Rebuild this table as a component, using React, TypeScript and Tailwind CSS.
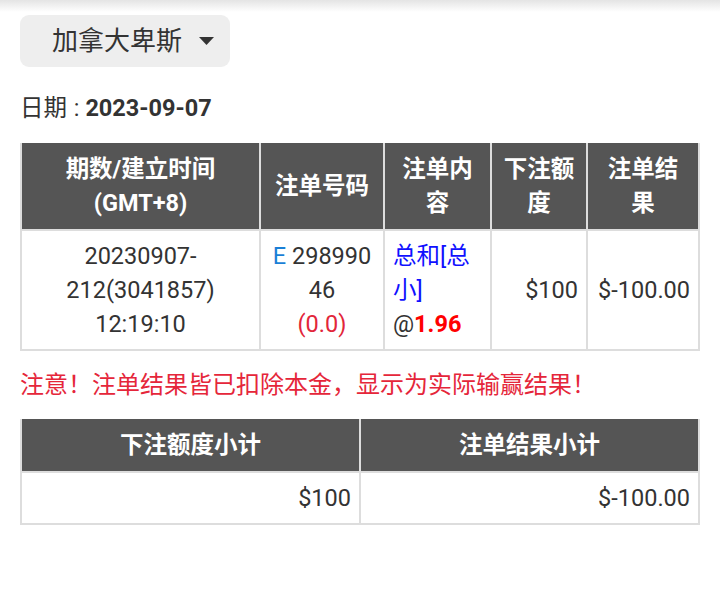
import React from 'react'

const FONT = "font-['Roboto','Noto_Sans_CJK_SC',sans-serif]"

const Th = ({ children }: { children: React.ReactNode }) => (
  <div className="flex items-center justify-center bg-[#555555] px-2 py-[9px] text-center font-bold text-white">
    <div>{children}</div>
  </div>
)

const Td = ({ children, align = 'center' }: { children: React.ReactNode; align?: 'center' | 'left' | 'right' }) => (
  <div
    className={`flex items-center bg-white px-2 py-2 ${
      align === 'center' ? 'justify-center text-center' : align === 'right' ? 'justify-end text-right' : 'justify-start text-left'
    }`}
  >
    <div>{children}</div>
  </div>
)

export default function App() {
  return (
    <div className={`${FONT} min-h-[595px] w-[720px] bg-white text-[23.5px] leading-[34px] text-[#333333]`}>
      {/* top bar shadow */}
      <div className="h-[12px] bg-gradient-to-b from-[#e4e4e4] to-white" />

      <div className="px-5 pt-[3px]">
        {/* dropdown */}
        <button className="flex h-[52px] w-[210px] items-center rounded-[9px] bg-[#eeeeee] pl-[32px] pr-4 text-[26px] text-[#333333]">
          <span>加拿大卑斯</span>
          <svg className="ml-auto" width="15" height="8" viewBox="0 0 15 8">
            <polygon points="0,0 15,0 7.5,8" fill="#333333" />
          </svg>
        </button>

        <div className="mt-6">
          日期 <span className="ml-[1px]">:</span> <span className="font-bold">2023-09-07</span>
        </div>

        {/* main table */}
        <div className="mt-[18px] grid grid-cols-[237px_122px_105px_94px_110px] gap-[2px] bg-[#dddddd] px-[2px] pb-[2px]">
          <Th>
            期数/建立时间
            <br />
            (GMT+8)
          </Th>
          <Th>注单号码</Th>
          <Th>
            注单内
            <br />容
          </Th>
          <Th>
            下注额
            <br />度
          </Th>
          <Th>
            注单结
            <br />果
          </Th>

          <Td>
            <div>20230907-</div>
            <div>212(3041857)</div>
            <div>12:19:10</div>
          </Td>
          <Td>
            <div className="break-all">
              <span className="text-[#1a7fd6]">E</span> 29899046
            </div>
            <div className="text-[#e2263a]">(0.0)</div>
          </Td>
          <Td align="left">
            <div className="text-[#1010ff]">总和[总小]</div>
            <div>
              @<span className="font-bold text-[#ff0000]">1.96</span>
            </div>
          </Td>
          <Td align="right">$100</Td>
          <Td align="right">$-100.00</Td>
        </div>

        <div className="mt-[17px] text-[24px] text-[#e5263a]">注意！注单结果皆已扣除本金，显示为实际输赢结果！</div>

        {/* subtotal table */}
        <div className="mt-[17px] grid grid-cols-2 gap-[2px] bg-[#dddddd] px-[2px] pb-[2px]">
          <Th>下注额度小计</Th>
          <Th>注单结果小计</Th>
          <Td align="right">$100</Td>
          <Td align="right">$-100.00</Td>
        </div>
      </div>
    </div>
  )
}
